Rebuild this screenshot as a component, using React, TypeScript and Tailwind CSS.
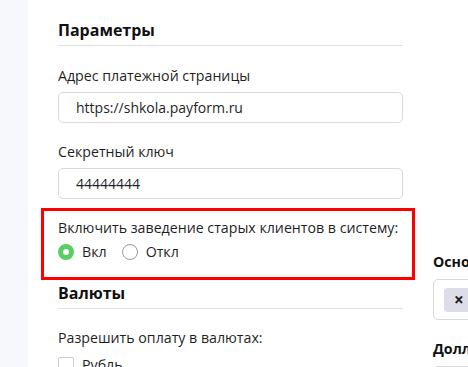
import React from "react";

const font = { fontFamily: '"Open Sans", "Noto Sans", sans-serif' };

const Field = ({ label, value }: { label: string; value: string }) => (
  <div className="flex flex-col">
    <label className="text-[14.2px] leading-[20px] text-[#1f1f1f]">{label}</label>
    <div className="mt-[6px] h-[31px] rounded-[5px] border border-[#d9d9d9] px-[17px] flex items-center text-[14px] text-[#1f1f1f]">
      {value}
    </div>
  </div>
);

export default function App() {
  return (
    <div className="flex w-[468px] h-[367px] overflow-hidden bg-white" style={font}>
      <div className="w-[28px] shrink-0 bg-[#f7f8fc]" />

      <div className="flex items-start gap-[30px] pl-[30px] shrink-0">
        {/* left column */}
        <div className="w-[345px] shrink-0 flex flex-col pt-[19px]">
          <h2 className="text-[16px] leading-[22px] font-bold text-[#111] pb-[4px] border-b border-[#dedfe8]">
            Параметры
          </h2>

          <div className="mt-[20px]">
            <Field label="Адрес платежной страницы" value="https://shkola.payform.ru" />
          </div>
          <div className="mt-[19px]">
            <Field label="Секретный ключ" value="44444444" />
          </div>

          <div className="mt-[9px] -ml-[17px] w-[374px] border-[3px] border-[#ff0000] pl-[14px] pt-[7px] pb-[15px]">
            <p className="text-[14.2px] leading-[20px] text-[#1f1f1f]">
              Включить заведение старых клиентов в систему:
            </p>
            <div className="mt-[4px] flex items-center h-[20px] text-[14.2px] text-[#1f1f1f]">
              <span className="w-[16px] h-[16px] rounded-full bg-[#5ccd62] flex items-center justify-center">
                <span className="w-[6px] h-[6px] rounded-full bg-white" />
              </span>
              <span className="ml-[8px]">Вкл</span>
              <span className="ml-[15px] w-[16px] h-[16px] rounded-full border border-[#9a9a9a]" />
              <span className="ml-[8px]">Откл</span>
            </div>
          </div>

          <h2 className="mt-[2px] text-[16px] leading-[22px] font-bold text-[#111] pb-[4px] border-b border-[#dedfe8]">
            Валюты
          </h2>
          <p className="mt-[19px] text-[14.2px] leading-[20px] text-[#1f1f1f]">Разрешить оплату в валютах:</p>
          <div className="mt-[7px] flex items-center text-[14.2px] text-[#1f1f1f]">
            <span className="w-[16px] h-[16px] shrink-0 rounded-[2px] border border-[#cfcfcf]" />
            <span className="ml-[8px] leading-[20px]">Рубль</span>
          </div>
        </div>

        {/* right column */}
        <div className="w-[300px] shrink-0 flex flex-col pt-[252px]">
          <p className="text-[14.2px] leading-[20px] font-bold text-[#111]">Основная валюта</p>
          <div className="mt-[7px] h-[41px] shrink-0 rounded-[5px] border border-[#d9d9d9] flex items-center pl-[10px]">
            <span className="h-[24px] rounded-[4px] bg-[#dcdde8] flex items-center px-[10px] gap-[6px] text-[13px] text-[#222]">
              <span className="font-bold text-[17px] leading-none">×</span>
              Рубль
            </span>
          </div>
          <p className="mt-[19px] text-[14.2px] leading-[20px] font-bold text-[#111]">Доллар США</p>
          <div className="mt-[7px] h-[41px] shrink-0 rounded-[5px] border border-[#d9d9d9]" />
        </div>
      </div>
    </div>
  );
}
